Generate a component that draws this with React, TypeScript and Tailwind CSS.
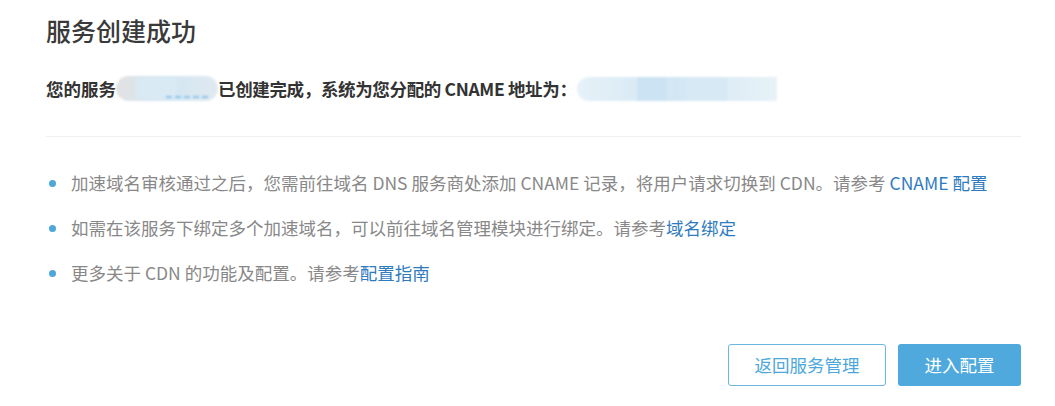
import React from 'react';

const tips = [
  {
    text: '加速域名审核通过之后，您需前往域名 DNS 服务商处添加 CNAME 记录，将用户请求切换到 CDN。请参考 ',
    link: 'CNAME 配置',
  },
  { text: '如需在该服务下绑定多个加速域名，可以前往域名管理模块进行绑定。请参考', link: '域名绑定' },
  { text: '更多关于 CDN 的功能及配置。请参考', link: '配置指南' },
];

const App = () => {
  return (
    <div
      className="w-[1055px] h-[406px] bg-white pl-[46px] pr-[34px] pt-[15px]"
      style={{ fontFamily: '"Noto Sans CJK SC", "DejaVu Sans", sans-serif' }}
    >
      <h1 className="text-[25px] leading-[30px] text-[#3a3a3a] font-medium">服务创建成功</h1>

      <p className="mt-[31px] text-[17.5px] leading-[24px] font-bold text-[#333] flex items-center">
        <span>您的服务</span>
        {/* redacted service name */}
        <span className="relative inline-block w-[102px] h-[25px] rounded-full bg-gradient-to-r from-[#e2e2e2] via-[#d3e7f4] to-[#dfe9ef] blur-[1px]">
          <span className="absolute left-[20px] top-[2px] w-[40px] h-[21px] bg-[#d9eaf5]" />
          <span className="absolute left-[50px] bottom-[3px] w-[42px] border-b-2 border-dashed border-[#8cc3e8]" />
        </span>
        <span className="tracking-[-0.35px]">已创建完成，系统为您分配的 CNAME 地址为：</span>
        {/* redacted cname */}
        <span className="relative inline-block w-[200px] h-[24px] rounded-l-full bg-gradient-to-r from-[#e6f1f8] via-[#d2e7f4] to-[#e8f2f8] blur-[1px]">
          <span className="absolute left-[60px] top-0 w-[30px] h-[24px] bg-[#cbe3f2]" />
          <span className="absolute left-[110px] top-0 w-[40px] h-[24px] bg-[#d7e9f5]" />
        </span>
      </p>

      <div className="mt-[35px] h-px bg-[#efefef]" />

      <ul className="mt-[34px] flex flex-col gap-[21px]">
        {tips.map((t) => (
          <li key={t.link} className="flex items-center text-[17.5px] leading-[24px] text-[#888]">
            <span className="w-[7px] h-[7px] rounded-full bg-[#4ea7da] ml-[3px] mr-[15px] shrink-0" />
            <span>
              {t.text}
              <a className="text-[#2f7bbf]">{t.link}</a>
            </span>
          </li>
        ))}
      </ul>

      <div className="mt-[59px] flex justify-end gap-[12px]">
        <button className="w-[158px] h-[42px] rounded-[3px] border border-[#6cb6e2] bg-white text-[17.5px] text-[#4ea7da]">
          返回服务管理
        </button>
        <button className="w-[123px] h-[42px] rounded-[3px] bg-[#4fa9dc] text-[17.5px] text-white">
          进入配置
        </button>
      </div>
    </div>
  );
};

export default App;
